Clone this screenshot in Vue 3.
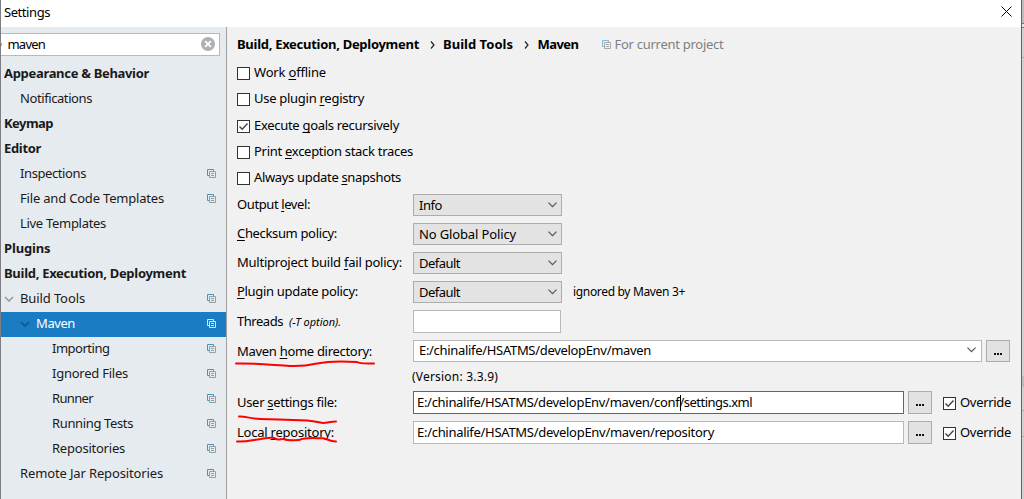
<script setup>
const tree = [
  { t: 'Appearance & Behavior', w: 146, lv: 0 },
  { t: 'Notifications', w: 73, lv: 1 },
  { t: 'Keymap', w: 50, lv: 0 },
  { t: 'Editor', w: 38, lv: 0 },
  { t: 'Inspections', w: 67, lv: 1, icon: true },
  { t: 'File and Code Templates', w: 145, lv: 1, icon: true },
  { t: 'Live Templates', w: 87, lv: 1 },
  { t: 'Plugins', w: 47.5, lv: 0 },
  { t: 'Build, Execution, Deployment', w: 183, lv: 0 },
  { t: 'Build Tools', w: 66, lv: 1, icon: true, open: true },
  { t: 'Maven', w: 40, lv: 2, icon: true, open: true, sel: true },
  { t: 'Importing', w: 58.5, lv: 3, icon: true },
  { t: 'Ignored Files', w: 77, lv: 3, icon: true },
  { t: 'Runner', w: 42, lv: 3, icon: true },
  { t: 'Running Tests', w: 82, lv: 3, icon: true },
  { t: 'Repositories', w: 74, lv: 3, icon: true },
  { t: 'Remote Jar Repositories', w: 144, lv: 1, icon: true },
]

const checks = [
  { t: ['Work ', 'o', 'ffline'], w: 73 },
  { t: ['Use plugin ', 'r', 'egistry'], w: 111 },
  { t: ['Execute ', 'g', 'oals recursively'], w: 146, on: true },
  { t: ['Print ', 'e', 'xception stack traces'], w: 160 },
  { t: ['Always update ', 's', 'napshots'], w: 148 },
]

const combos = [
  { t: ['Output ', 'l', 'evel:'], w: 74, v: 'Info', vw: 24 },
  { t: ['', 'C', 'hecksum policy:'], w: 101, v: 'No Global Policy', vw: 98 },
  { t: ['Multiproject build ', 'f', 'ail policy:'], w: 166, v: 'Default', vw: 42 },
  { t: ['', 'P', 'lugin update policy:'], w: 122, v: 'Default', vw: 42, note: 'ignored by Maven 3+' },
]

const files = [
  { t: ['User ', 's', 'ettings file:'], w: 101, a: 'E:/chinalife/HSATMS/developEnv/maven/conf', aw: 263.5, b: '/settings.xml', bw: 73.5, focus: true },
  { t: ['Local ', 'r', 'epository:'], w: 98, a: 'E:/chinalife/HSATMS/developEnv/maven/repository', aw: 298 },
]

// Spreads the letters of a label over the given width, less one pixel of side bearing.
const vFit = {
  mounted(el, { value }) {
    const n = el.textContent.length
    el.style.letterSpacing = `${(value - 1 - el.getBoundingClientRect().width) / n}px`
  },
}
</script>

<template>
  <div class="window">
    <header class="titlebar">
      <span v-fit="47" class="txt">Settings</span>
      <svg class="close" width="11" height="11" viewBox="0 0 11 11"><path d="M.5 .5l10 10M10.5 .5l-10 10" /></svg>
    </header>
    <div class="body">
      <aside class="sidebar">
        <div class="search">
          <i class="tick"></i>
          <span v-fit="38.5" class="txt">maven</span>
          <svg class="clear" width="14" height="14" viewBox="0 0 14 14">
            <circle cx="7" cy="7" r="7" fill="#afb1b3" />
            <path d="M4.2 4.2l5.6 5.6M9.8 4.2l-5.6 5.6" stroke="#fff" stroke-width="1.9" />
          </svg>
        </div>
        <div v-for="n in tree" :key="n.t" class="node" :class="['lv' + n.lv, { sel: n.sel }]">
          <svg v-if="n.open" class="arrow" width="10" height="6" viewBox="0 0 10 6"><path d="M1 1l4 4 4-4" /></svg>
          <span v-fit="n.w" class="txt">{{ n.t }}</span>
          <svg v-if="n.icon" class="copy" width="9" height="9" viewBox="0 0 9 9">
            <path class="back" d="M2 6.5H.5v-6h6V2" />
            <path class="front" d="M2.5 2.5h6v6h-6zM4 4.5h3M4 6.5h3" />
          </svg>
        </div>
      </aside>
      <main class="panel">
        <div class="crumbs">
          <b v-fit="183" class="txt c1">Build, Execution, Deployment</b>
          <svg class="sep" width="5" height="8" viewBox="0 0 5 8"><path d="M1 .5L4 4 1 7.5" /></svg>
          <b v-fit="71" class="txt c2">Build Tools</b>
          <svg class="sep" width="5" height="8" viewBox="0 0 5 8"><path d="M1 .5L4 4 1 7.5" /></svg>
          <b v-fit="42" class="txt c3">Maven</b>
          <svg class="copy light" width="9" height="9" viewBox="0 0 9 9">
            <path class="back" d="M2 6.5H.5v-6h6V2" />
            <path class="front" d="M2.5 2.5h6v6h-6zM4 4.5h3M4 6.5h3" />
          </svg>
          <span v-fit="110" class="txt scope">For current project</span>
        </div>

        <div v-for="c in checks" :key="c.w" class="check">
          <svg class="box" width="13" height="13" viewBox="0 0 13 13">
            <rect x=".5" y=".5" width="12" height="12" />
            <path v-if="c.on" d="M2.5 6.5l2.7 2.7 5.3-5.6" />
          </svg>
          <span v-fit="c.w" class="txt">{{ c.t[0] }}<u>{{ c.t[1] }}</u>{{ c.t[2] }}</span>
        </div>

        <div class="combos">
          <div v-for="c in combos" :key="c.w" class="row">
            <div class="label"><span v-fit="c.w" class="txt">{{ c.t[0] }}<u>{{ c.t[1] }}</u>{{ c.t[2] }}</span></div>
            <div class="combo">
              <span v-fit="c.vw" class="txt">{{ c.v }}</span>
              <svg class="chev" width="9" height="6" viewBox="0 0 9 6"><path d="M.5 .7l4 4 4-4" /></svg>
            </div>
            <span v-if="c.note" v-fit="113" class="txt note">{{ c.note }}</span>
          </div>
        </div>

        <div class="row threads">
          <div class="label"><span v-fit="47" class="txt">Threads</span><i v-fit="53" class="txt opt">(-T option).</i></div>
          <div class="field"></div>
        </div>

        <div class="row home">
          <div class="label">
            <span v-fit="136" class="txt">Maven <u>h</u>ome directory:</span>
            <svg class="mark m1" width="144" height="10" viewBox="0 0 144 10">
              <path d="M2 4.5C20 4 38 6 56 7C64 7.400 74 6.500 83 4.500C94 2.200 112 2.200 123 3C126 5 132 4.400 140 4.500" />
            </svg>
          </div>
          <div class="field wide">
            <span v-fit="233" class="txt">E:/chinalife/HSATMS/developEnv/maven</span>
            <svg class="chev" width="9" height="6" viewBox="0 0 9 6"><path d="M.5 .7l4 4 4-4" /></svg>
          </div>
          <div class="more"><i></i><i></i><i></i></div>
        </div>

        <div class="version"><span v-fit="87" class="txt">(Version: 3.3.9)</span></div>

        <div v-for="f in files" :key="f.w" class="row file" :class="{ focus: f.focus }">
          <div class="label">
            <span v-fit="f.w" class="txt">{{ f.t[0] }}<u>{{ f.t[1] }}</u>{{ f.t[2] }}</span>
            <svg v-if="f.focus" class="mark m2" width="104" height="12" viewBox="0 0 104 12">
              <path d="M4 2.500C10 2 14 4.500 25 5C40 5.600 60 6 72 6.500C82 7.200 85 9 88 9C93 9 95 7.500 101 7.500" />
            </svg>
            <svg v-else class="mark m3" width="104" height="10" viewBox="0 0 104 10">
              <path d="M2 6.500C14 7 16 5 26 4C32 3 36 2 40 3.200C43 6 46 3.400 49 4C53 6 58 5.500 64 5C71 1.800 82 3.500 88 3.200C92 3.500 94 6.500 101 6.500" />
            </svg>
          </div>
          <div class="field">
            <span v-fit="f.aw" class="txt">{{ f.a }}</span>
            <i v-if="f.focus" class="caret"></i>
            <span v-if="f.b" v-fit="f.bw" class="txt">{{ f.b }}</span>
          </div>
          <div class="more"><i></i><i></i><i></i></div>
          <svg class="box" width="13" height="13" viewBox="0 0 13 13">
            <rect x=".5" y=".5" width="12" height="12" />
            <path d="M2.500 6.500l2.700 2.700 5.300-5.600" />
          </svg>
          <span v-fit="52" class="txt">Override</span>
        </div>
      </main>
    </div>
    <div class="edge"></div>
  </div>
</template>

<style scoped>
* { box-sizing: border-box; }
.window {
  position: relative;
  width: 1024px;
  height: 499px;
  overflow: hidden;
  display: flex;
  flex-direction: column;
  border-left: 1px solid #7f7c86;
  background: #f1f1f1;
  color: #000;
  font: 13px/17px "Noto Sans", "Open Sans", sans-serif;
}
.edge {
  position: absolute;
  right: 0;
  top: 0;
  width: 3px;
  height: 499px;
  border-left: 1px solid #1a78be;
  background: linear-gradient(#bdbdbd 0 23px, #777 23px 24px, #e4e4e4 24px 27px, #777 27px 28px, #d0d0d0 28px 57px, #aaa 57px 58px, #d0d0d0 58px 376px, #bdbdbd 376px 387px, #d0d0d0 387px 410px, #aaa 410px 411px, #d0d0d0 411px 436px, #aaa 436px 437px, #d0d0d0 437px);
}
.txt { white-space: pre; flex: none; position: relative; top: -1px; }
u { text-decoration-thickness: 1px; text-underline-offset: 2px; text-decoration-skip-ink: none; }
svg { flex: none; fill: none; display: block; }
.titlebar {
  flex: none;
  height: 27px;
  background: #fff;
  display: flex;
  align-items: center;
  padding: 0 12px 3px 3px;
}
.titlebar .txt { top: 0; }
.close { margin-left: auto; stroke: #000; stroke-width: 1; position: relative; top: -1px; }
.body { flex: 1; display: flex; min-height: 0; }
.sidebar { width: 226px; flex: none; background: #e6ebef; border-right: 1px solid #a0a0a0; }
.search {
  height: 23px;
  width: 219px;
  margin: 6px 0 6px;
  background: #fff;
  border: 1px solid #b6b9bb;
  border-left: 0;
  display: flex;
  align-items: center;
  padding-right: 4px;
}
.search .txt { top: 0; }
.tick { width: 1px; height: 3px; background: #aaa; margin-right: 5.500px; }
.clear { margin-left: auto; position: relative; top: -0.500px; }
.node { height: 25px; display: flex; align-items: center; color: #1a1a1a; padding-right: 10px; }
.lv0 { padding-left: 3px; font-weight: 700; }
.lv1 { padding-left: 19px; }
.lv2 { padding-left: 35px; }
.lv3 { padding-left: 51px; }
.sel { background: #1a7dc4; color: #fff; }
.arrow { margin-left: -16px; margin-right: 6px; stroke: #9a9da0; stroke-width: 1.700; position: relative; top: -1px; }
.sel .arrow { stroke: #125786; }
.copy { margin-left: auto; }
.node .copy { position: relative; top: -1px; }
.copy .back { stroke: #4795bd; }
.copy .front { stroke: #9a9da0; }
.sel .copy path { stroke: #d5e6f3; }
.panel { flex: 1; padding-left: 10px; }
.crumbs { height: 36px; display: flex; align-items: center; margin-bottom: 4px; }
.c1 { margin-right: 10.500px; }
.c2 { margin-left: 8.500px; margin-right: 10.500px; }
.c3 { margin-left: 9px; }
.sep { stroke: #222; stroke-width: 1.200; }
.copy.light { margin-left: 23px; margin-right: 4px; position: relative; top: -0.500px; }
.copy.light .back { stroke: #7fbbd9; }
.copy.light .front { stroke: #a8a8a8; }
.scope { color: #808080; }
.check { height: 13px; display: flex; align-items: center; margin-bottom: 13px; }
.check:nth-child(3) { margin-bottom: 14px; }
.box { margin-right: 4px; }
.box rect { fill: #fff; stroke: #333; }
.box path { stroke: #444; stroke-width: 1.400; }
.combos { display: grid; gap: 7px; margin-top: -4px; }
.row { display: flex; align-items: center; height: 22px; }
.label { width: 176px; flex: none; display: flex; align-items: center; position: relative; }
.combo {
  width: 149px;
  height: 22px;
  border: 1px solid #adadad;
  background: #e3e3e3;
  display: flex;
  align-items: center;
  padding: 2px 4px 0 5px;
}
.chev { margin-left: auto; stroke: #555; stroke-width: 1.200; position: relative; top: -1px; }
.note { margin-left: 11px; font-size: 12px; }
.label .opt { font-size: 11px; margin-left: 6px; top: 1px; }
.field {
  height: 23px;
  width: 491px;
  flex: none;
  border: 1px solid #b8b8b8;
  background: #fff;
  display: flex;
  align-items: center;
  padding-left: 3px;
}
.threads { height: 23px; margin-top: 7px; }
.threads .field { width: 148px; }
.threads .txt, .home .label .txt, .file .txt { top: 0; }
.home { margin-top: 7px; }
.home .field { width: 569px; height: 22px; padding: 0 5px; }
.more {
  width: 24px;
  align-self: stretch;
  margin-left: 4px;
  border: 1px solid #adadad;
  background: #e2e2e2;
  display: flex;
  justify-content: center;
  gap: 1px;
  padding-top: 12px;
}
.more i { width: 2px; height: 2px; background: #111; }
.version { height: 29px; padding: 7px 0 0 175px; font-size: 12px; }
.file { height: 23px; margin-bottom: 7px; }
.file .more { margin-right: 11px; }
.file .box { position: relative; top: 1px; }
.focus .field { border-color: #0f7bd0; }
.caret { width: 1px; height: 16px; margin-right: -1px; background: #000; }
.mark { position: absolute; left: -4px; stroke: #f00; stroke-width: 2; stroke-linecap: round; stroke-linejoin: round; }
.m1 { left: -3.500px; top: 16px; }
.m2 { left: -2px; top: 20px; }
.m3 { left: -2px; top: 11px; }
</style>
